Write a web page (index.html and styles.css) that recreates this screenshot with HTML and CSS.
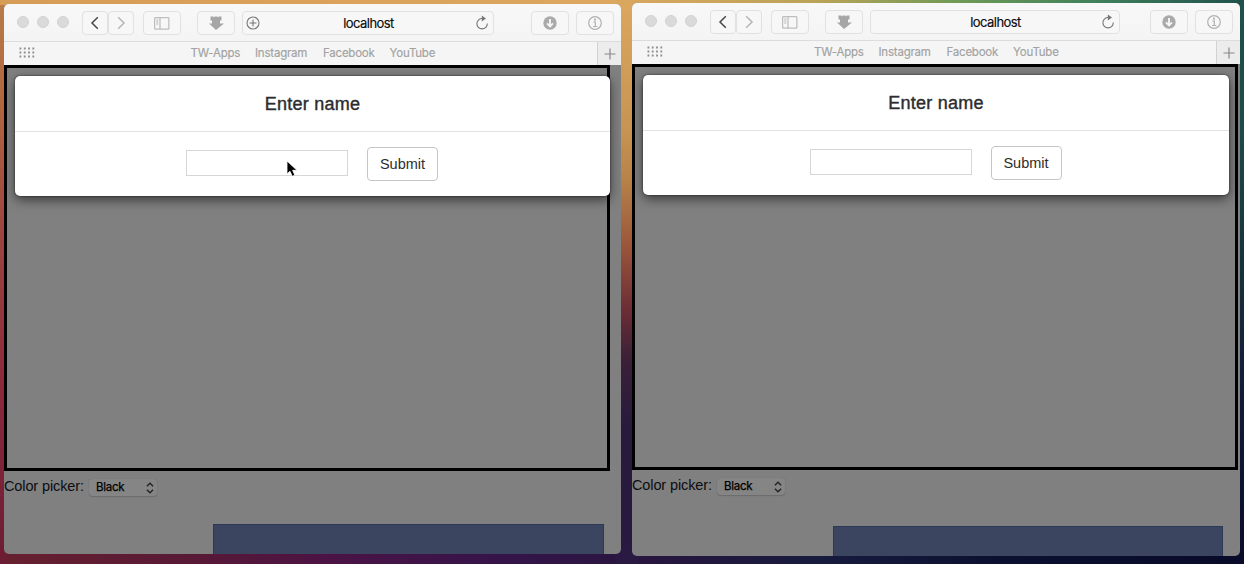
FILE: index.html
```html
<!DOCTYPE html>
<html lang="en">
<head>
<meta charset="utf-8">
<title>localhost</title>
<link rel="stylesheet" href="styles.css">
</head>
<body>
<svg class="defs" aria-hidden="true">
  <symbol id="back" viewBox="0 0 24 20"><path d="M14.800 4.200 9 10l5.800 5.800" fill="none" stroke="currentColor" stroke-width="1.500"/></symbol>
  <symbol id="side" viewBox="0 0 16 13"><path d="M.7 .7h14.200v11.400H.7zM6 .7v11.400M2.300 3h2M2.300 5h2M2.300 7h2" fill="none" stroke="currentColor"/></symbol>
  <symbol id="arrow" viewBox="0 0 16 16"><path d="M2.500 1.500h3v.7h1v-.7h3v.7h1v-.7h3v4h-1.500v3h4L8 15 1 8.500h3v-3H2.500z" fill="currentColor"/></symbol>
  <symbol id="reload" viewBox="0 0 14 16"><path d="M7.500 3.500A5.200 5.200 0 1 0 12.300 8.500" fill="none" stroke="currentColor" stroke-width="1.100"/><path d="M6.800 .5v6L11 3.500z" fill="currentColor"/></symbol>
  <symbol id="plusring" viewBox="0 0 14 14"><path d="M7 3.500v7M3.500 7h7M13 7A6 6 0 1 1 1 7a6 6 0 0 1 12 0z" fill="none" stroke="currentColor" stroke-width="1.100"/></symbol>
  <symbol id="down" viewBox="0 0 14 14"><circle cx="7" cy="7" r="6.700" fill="currentColor"/><path d="M7 3v7M4 7.300l3 3 3-3" fill="none" stroke="#f5f5f5" stroke-width="1.900"/></symbol>
  <symbol id="info" viewBox="0 0 14 14"><path d="M13.300 7A6.300 6.300 0 1 1 .7 7a6.300 6.300 0 0 1 12.600 0zM5.300 6h2v4.500M5 10.500h4.300" fill="none" stroke="currentColor" stroke-width="1.200"/><circle cx="7" cy="3.700" r="1.100" fill="currentColor"/></symbol>
  <symbol id="grid" viewBox="0 0 16 12"><path d="M.5 1.500h15M.5 5.500h15M.5 9.500h15" stroke="currentColor" stroke-width="1.800" stroke-dasharray="1.800 2.500"/></symbol>
  <symbol id="plus" viewBox="0 0 12 12"><path d="M6 .5v11M.5 6h11" stroke="currentColor" stroke-width="1.200"/></symbol>
  <symbol id="updown" viewBox="0 0 8 12"><path d="M.9 4.300 4 1.200l3.100 3.100M.9 7.700 4 10.800l3.100-3.100" fill="none" stroke="currentColor" stroke-width="1.300"/></symbol>
</svg>
<main class="desktop">
  <section class="window window-left">
    <header class="toolbar">
      <div class="lights"><i></i><i></i><i></i></div>
      <div class="nav"><span class="tool"><svg><use href="#back"/></svg></span><span class="tool forward"><svg><use href="#back"/></svg></span></div>
      <span class="tool wide side"><svg><use href="#side"/></svg></span>
      <span class="tool wide fetch"><svg><use href="#arrow"/></svg></span>
      <div class="address"><svg class="add"><use href="#plusring"/></svg><span>localhost</span><svg class="reload"><use href="#reload"/></svg></div>
      <span class="tool wide down"><svg><use href="#down"/></svg></span>
      <span class="tool wide info"><svg><use href="#info"/></svg></span>
    </header>
    <nav class="favorites">
      <svg class="apps"><use href="#grid"/></svg>
      <a class="tw">TW-Apps</a><a class="ig">Instagram</a><a class="fb">Facebook</a><a class="yt">YouTube</a>
      <span class="newtab"><svg><use href="#plus"/></svg></span>
    </nav>
    <div class="page">
      <div class="canvas"></div>
      <div class="picker"><span>Color picker:</span><div class="select"><span>Black</span><svg><use href="#updown"/></svg></div></div>
      <div class="panel"></div>
      <div class="modal">
        <h1>Enter name</h1>
        <div class="form"><div class="field"></div><div class="submit">Submit</div></div>
      </div>
    </div>
    <svg class="cursor" viewBox="0 0 12 18"><path d="M1 1v13l3-2.700 2.200 5 2.600-1.100L6.600 10.300H11z" fill="#000" stroke="#fff" stroke-width=".8"/></svg>
  </section>
  <section class="window window-right">
    <header class="toolbar">
      <div class="lights"><i></i><i></i><i></i></div>
      <div class="nav"><span class="tool"><svg><use href="#back"/></svg></span><span class="tool forward"><svg><use href="#back"/></svg></span></div>
      <span class="tool wide side"><svg><use href="#side"/></svg></span>
      <span class="tool wide fetch"><svg><use href="#arrow"/></svg></span>
      <div class="address"><span>localhost</span><svg class="reload"><use href="#reload"/></svg></div>
      <span class="tool wide down"><svg><use href="#down"/></svg></span>
      <span class="tool wide info"><svg><use href="#info"/></svg></span>
    </header>
    <nav class="favorites">
      <svg class="apps"><use href="#grid"/></svg>
      <a class="tw">TW-Apps</a><a class="ig">Instagram</a><a class="fb">Facebook</a><a class="yt">YouTube</a>
      <span class="newtab"><svg><use href="#plus"/></svg></span>
    </nav>
    <div class="page">
      <div class="canvas"></div>
      <div class="picker"><span>Color picker:</span><div class="select"><span>Black</span><svg><use href="#updown"/></svg></div></div>
      <div class="panel"></div>
      <div class="modal">
        <h1>Enter name</h1>
        <div class="form"><div class="field"></div><div class="submit">Submit</div></div>
      </div>
    </div>
  </section>
</main>
</body>
</html>
```
FILE: styles.css
```css
* { box-sizing: border-box; }
body { margin: 0; overflow: hidden; font-family: "Liberation Sans", Arial, sans-serif; }
.defs { display: none; }
svg { display: block; flex: none; }

.desktop {
  display: flex;
  align-items: flex-start;
  gap: 11px;
  width: 1244px;
  height: 564px;
  padding: 3px 4px 0;
  background:
    linear-gradient(90deg, #d79c55 0, #dda75f 600px, #b9a357 820px, #6e9a56 960px, #3f7f5b 1100px, #20504c 1244px) 0 0 / 100% 5px no-repeat,
    linear-gradient(#b97c47 0, #b0653f 110px, #9d4540 230px, #8c2a3b 380px, #6c1c34 564px) 0 0 / 6px 100% no-repeat,
    linear-gradient(#dca75d 0, #c69453 130px, #b78248 180px, #98533a 250px, #6b2d35 310px, #3a2038 360px, #281a3c 430px, #2a1942 564px) 615px 0 / 24px 100% no-repeat,
    linear-gradient(#20504c 0, #1f4a4b 130px, #17323f 260px, #111a35 400px, #090b2a 564px) 100% 0 / 8px 100% no-repeat,
    linear-gradient(90deg, #67202f 0, #571936 200px, #4b1345 330px, #35144a 500px, #28163f 640px, #171b3e 820px, #0b1030 1000px, #080a28 1244px);
}

.window { position: relative; overflow: hidden; border-radius: 5px; background: #808080; }
.window-left { width: 617px; height: 550px; margin-top: 1px; }
.window-right { width: 608px; height: 553px; }

.toolbar {
  display: flex;
  height: 38px;
  padding: 7px 0 0 13px;
  border-bottom: 1px solid #dcdcdc;
  background: linear-gradient(#f8f8f8, #f4f4f4);
}
.lights { display: flex; gap: 8px; padding-top: 5px; }
.lights i { width: 12px; height: 12px; border: 1px solid #d2d2d2; border-radius: 50%; background: #dadada; }
.nav { display: flex; margin-left: 12px; }
.tool {
  display: flex;
  align-items: center;
  justify-content: center;
  width: 26px;
  height: 24px;
  border: 1px solid #e1e1e1;
  border-radius: 4px;
  background: #f7f7f7;
  color: #b0b0b0;
}
.nav .tool { color: #484848; }
.nav .tool svg { width: 24px; height: 20px; }
.nav .tool.forward { color: #b5b5b5; }
.forward svg { transform: scaleX(-1); }
.wide { width: 38px; }
.side { margin-left: 9px; }
.side svg { width: 16px; height: 13px; }
.fetch { margin-left: 16px; }
.fetch svg { width: 16px; height: 16px; color: #a6a6a6; }
.address {
  position: relative;
  width: 252px;
  height: 24px;
  margin-left: 7px;
  border: 1px solid #e1e1e1;
  border-radius: 4px;
  background: #f7f7f7;
  color: #0c0c0c;
  font: 13px/23px Inter, sans-serif;
  letter-spacing: -.55px;
  text-align: center;
  -webkit-text-stroke: .15px #0c0c0c;
}
.address > span { display: block; padding-left: 2px; }
.address .add { position: absolute; left: 3px; top: 4px; width: 14px; height: 14px; color: #777; }
.address .reload { position: absolute; right: 4px; top: 3px; width: 14px; height: 16px; color: #777; }
.down { margin-left: 37px; }
.down svg, .info svg { width: 14px; height: 14px; }
.down svg { color: #aaa; }
.info { margin-left: 7px; }
.window-left .nav, .window-right .nav { margin-left: 12.500px; }
.window-right .address { width: 250px; }
.window-right .down { margin-left: 30px; }

.favorites {
  display: flex;
  height: 23px;
  padding-left: 15px;
  background: #f5f5f5;
  color: #a2a2a2;
  font: 11.500px/23px Inter, sans-serif;
  letter-spacing: -.22px;
  -webkit-text-stroke: .15px #a2a2a2;
}
.apps { width: 16px; height: 12px; margin-top: 5px; color: #8d8d8d; }
.favorites a { white-space: nowrap; }
.tw { width: 64.500px; margin-left: 155.500px; }
.ig { width: 68px; }
.fb { width: 66.500px; }
.yt { width: 60px; }
.newtab { display: flex; align-items: center; justify-content: center; width: 24px; margin-left: auto; border-left: 1px solid #d2d2d2; background: #ececec; color: #888; }
.newtab svg { width: 12px; height: 12px; }
.window-right .tw { margin-left: 151px; }

.page { position: relative; color: #0d0d12; }
.canvas { width: 606px; height: 406px; border: 3px solid #000; }
.picker { display: flex; height: 53px; padding-top: 6px; font-size: 14.500px; line-height: 19px; }
.picker > span { width: 85px; letter-spacing: -.12px; white-space: nowrap; }
.select {
  display: flex;
  align-items: center;
  justify-content: space-between;
  width: 68px;
  height: 17px;
  margin-top: 2px;
  padding: 0 3px 0 7px;
  border-radius: 4px;
  background: #858585;
  box-shadow: 0 0 1px #666, 0 1px 1px #6c6c6c;
  color: #000;
  font: 11.500px/17px Inter, sans-serif;
  letter-spacing: -.25px;
  -webkit-text-stroke: .25px #000;
}
.select svg { width: 8px; height: 12px; color: #222; }
.panel { width: 391px; height: 31px; margin-left: 209px; border: 1px solid #2c3858; border-bottom: 0; background: #3c455f; }
.window-right .picker { height: 56px; }
.window-right .panel { width: 390px; margin-left: 201px; }

/* Dialog laid over the dimmed page */
.modal {
  position: absolute;
  top: 11px;
  left: 11px;
  width: 595px;
  height: 120px;
  border-radius: 5px;
  background: #fff;
  box-shadow: 0 4px 12px rgba(0, 0, 0, .55), 0 0 2px rgba(0, 0, 0, .7);
  color: #2c2c2e;
}
.modal h1 {
  height: 56px;
  margin: 0;
  border-bottom: 1px solid #e2e2e2;
  font-size: 18px;
  font-weight: 400;
  line-height: 56px;
  letter-spacing: .25px;
  text-align: center;
  -webkit-text-stroke: .4px #2c2c2e;
}
.form { display: flex; justify-content: center; gap: 19px; padding: 15px 1px 0 0; }
.field { width: 162px; height: 26px; margin-top: 3px; border: 1px solid #d6d6d6; }
.submit { width: 71px; height: 34px; border: 1px solid #c5c5c5; border-radius: 4px; font-size: 14.500px; line-height: 32px; text-align: center; }
.window-right .modal { width: 586px; }

.cursor { position: absolute; left: 282px; top: 156px; width: 12px; height: 18px; }
```
